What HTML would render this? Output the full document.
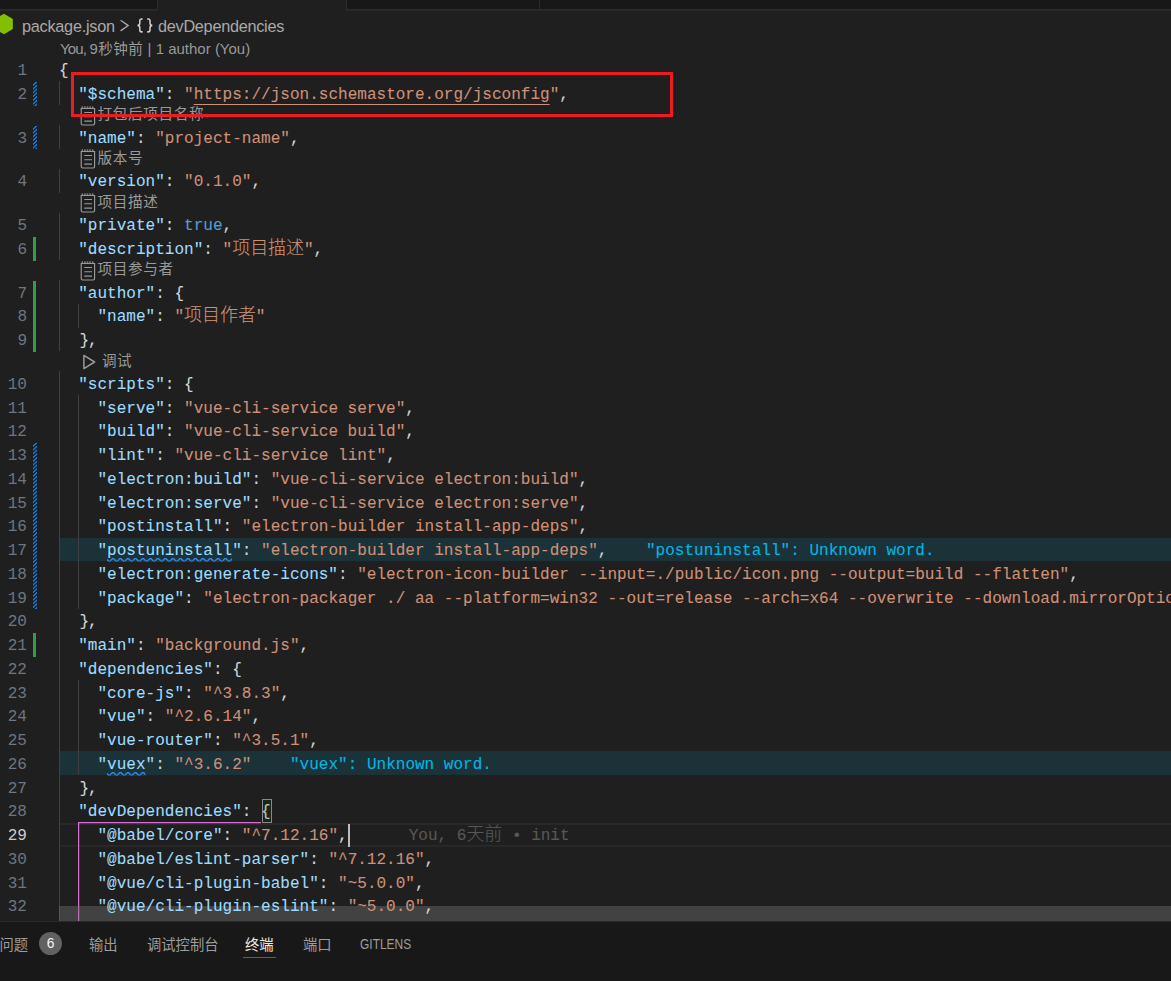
<!DOCTYPE html>
<html lang="zh-CN">
<head>
<meta charset="utf-8">
<title>package.json</title>
<style>
html,body{margin:0;padding:0;}
body{width:1171px;height:981px;overflow:hidden;background:#1f1f1f;position:relative;font-family:"Liberation Sans","Noto Sans CJK SC",sans-serif;}
.abs{position:absolute;}
#tabs{position:absolute;left:0;top:0;width:1171px;height:10px;background:#181818;}
#tabs div{position:absolute;top:0;height:9px;}
#bc{position:absolute;left:0;top:10px;width:1171px;height:27.5px;line-height:27.5px;font-size:16.25px;color:#a9a9a9;white-space:nowrap;}
.ln{position:absolute;left:0;width:27px;text-align:right;font-family:"Liberation Mono",monospace;font-size:16.04px;color:#6e7681;height:23.75px;line-height:23.75px;}
.ln.act{color:#cccccc;}
.row{position:absolute;left:59px;height:23.75px;line-height:23.75px;font-family:"Liberation Mono","Noto Sans CJK SC",monospace;font-size:16.04px;white-space:pre;color:#d4d4d4;-webkit-text-stroke:0.09px currentColor;}
.k{color:#9cdcfe;}
.s{color:#ce9178;}
.p{color:#d4d4d4;}
.b{color:#569cd6;}
.c{font-size:17.95px;line-height:0;font-weight:300;-webkit-text-stroke:0.1px currentColor;}
.c2{font-size:17.5px;line-height:0;}
.u{text-decoration:underline;text-decoration-thickness:1px;text-underline-offset:4.6px;}
.bm{position:relative;}
.bm:before{content:'';position:absolute;left:0.9px;top:-4.5px;width:10.2px;height:23.75px;box-sizing:border-box;border:1px solid #888;background:rgba(0,100,0,0.1);}
.cur{display:inline-block;width:2px;margin-left:0;height:23.75px;background:#bdbdbd;vertical-align:top;margin-right:-2px;position:relative;top:-1.5px;}
.el{color:#00b7e4;margin-left:38.5px;}
.bl{color:#585858;margin-left:61px;}
.cl{position:absolute;height:20px;line-height:20px;font-size:15px;color:#999999;white-space:nowrap;font-family:"Liberation Sans","Noto Sans CJK SC",sans-serif;}
.g{position:absolute;width:1px;background:#404040;}
.gadd{position:absolute;left:33px;width:3px;background:#2ea043;}
.gmod{position:absolute;left:33px;width:4px;background-image:linear-gradient(-45deg,#0a80e0 25%,#1f1f1f 25%,#1f1f1f 50%,#0a80e0 50%,#0a80e0 75%,#1f1f1f 75%,#1f1f1f);background-size:3.75px 3.75px;}
.hl{position:absolute;left:59px;width:1112px;height:23.75px;background:#1b3238;}
#panel{position:absolute;left:0;top:921px;width:1171px;height:60px;background:#181818;border-top:1px solid #2b2b2b;}
.pt{position:absolute;top:10px;height:26px;line-height:26px;font-size:14.3px;color:#9d9d9d;white-space:nowrap;}
</style>
</head>
<body>

<div id="tabs">
<div style="left:0;width:157px;border-right:1px solid #2b2b2b;border-bottom:1px solid #2b2b2b;"></div>
<div style="left:158px;width:188px;height:11px;background:#1f1f1f;"></div>
<div style="left:346px;width:1px;height:11px;background:#2b2b2b;"></div>
<div style="left:347px;width:192px;border-right:1px solid #2b2b2b;border-bottom:1px solid #2b2b2b;"></div>
<div style="left:540px;width:631px;border-bottom:1px solid #2b2b2b;"></div>
<div style="left:0;top:10px;width:157px;height:1px;background:#272727"></div>
<div style="left:347px;top:10px;width:824px;height:1px;background:#272727"></div>
</div>
<div id="bc">
<svg class="abs" style="left:-5px;top:3px" width="19" height="22" viewBox="0 0 19 22"><polygon points="9,0.8 17.85,5.9 17.85,16.1 9,21.2 0.15,16.1 0.15,5.9" fill="#83bf00"/></svg>
<span class="abs" style="left:22px;top:3px;letter-spacing:-0.25px">package.json</span>
<svg class="abs" style="left:119px;top:10px" width="12" height="12" viewBox="0 0 12 12"><path d="M1.6 0.3 L9.2 5.6 L1.6 10.9" fill="none" stroke="#a9a9a9" stroke-width="1.3"/></svg>
<svg class="abs" style="left:136px;top:7.6px" width="18" height="15" viewBox="0 0 18 14" preserveAspectRatio="none"><path d="M6.6 0.9 H5.6 Q3.8 0.9 3.8 2.7 V4.8 Q3.8 6.6 1.6 6.9 Q3.8 7.2 3.8 9 V11.1 Q3.8 12.9 5.6 12.9 H6.6 M11.2 0.9 H12.2 Q14 0.9 14 2.7 V4.8 Q14 6.6 16.2 6.9 Q14 7.2 14 9 V11.1 Q14 12.9 12.2 12.9 H11.2" fill="none" stroke="#d0d0d0" stroke-width="1.5"/></svg>
<span class="abs" style="left:158px;top:3px;letter-spacing:-0.27px">devDependencies</span>
</div>
<div class="hl" style="top:537.50px"></div>
<div class="hl" style="top:751.25px"></div>
<div class="abs" style="left:60px;width:1111px;top:823px;height:2px;background:#292929"></div>
<div class="abs" style="left:60px;width:1111px;top:845px;height:2px;background:linear-gradient(#2a2a2a 0,#2a2a2a 50%,#262626 50%,#262626 100%)"></div>
<div class="g" style="left:59px;top:81.25px;height:23.75px;background:#404040"></div>
<div class="g" style="left:59px;top:125.00px;height:23.75px;background:#404040"></div>
<div class="g" style="left:59px;top:168.75px;height:23.75px;background:#404040"></div>
<div class="g" style="left:59px;top:212.50px;height:47.50px;background:#404040"></div>
<div class="g" style="left:59px;top:280.00px;height:71.25px;background:#404040"></div>
<div class="g" style="left:59px;top:371.25px;height:549.75px;background:#404040"></div>
<div class="g" style="left:78px;top:303.75px;height:23.75px;background:#404040"></div>
<div class="g" style="left:78px;top:395.00px;height:213.75px;background:#404040"></div>
<div class="g" style="left:78px;top:680.00px;height:95.00px;background:#404040"></div>
<div class="g" style="left:78px;top:822.00px;height:99.00px;background:#d56ed2"></div>
<div class="g" style="left:79px;top:822.00px;height:99.00px;background:rgba(218,112,214,0.22)"></div>
<div class="abs" style="left:78px;top:822px;width:183px;height:1px;background:#d56ed2"></div>
<div class="abs" style="left:79px;top:823px;width:182px;height:1px;background:rgba(218,112,214,0.22)"></div>
<div class="abs" style="left:59px;top:906px;width:1112px;height:15px;background:rgba(121,121,121,0.4)"></div>
<div class="gmod" style="top:81.75px;height:23.75px"></div>
<div class="gmod" style="top:125.50px;height:23.75px"></div>
<div class="gadd" style="top:236.75px;height:23.75px"></div>
<div class="gadd" style="top:280.50px;height:71.25px"></div>
<div class="gmod" style="top:443.00px;height:166.25px"></div>
<div class="gadd" style="top:633.00px;height:23.75px"></div>
<div class="ln" style="top:60.00px">1</div>
<div class="ln" style="top:83.75px">2</div>
<div class="ln" style="top:127.50px">3</div>
<div class="ln" style="top:171.25px">4</div>
<div class="ln" style="top:215.00px">5</div>
<div class="ln" style="top:238.75px">6</div>
<div class="ln" style="top:282.50px">7</div>
<div class="ln" style="top:306.25px">8</div>
<div class="ln" style="top:330.00px">9</div>
<div class="ln" style="top:373.75px">10</div>
<div class="ln" style="top:397.50px">11</div>
<div class="ln" style="top:421.25px">12</div>
<div class="ln" style="top:445.00px">13</div>
<div class="ln" style="top:468.75px">14</div>
<div class="ln" style="top:492.50px">15</div>
<div class="ln" style="top:516.25px">16</div>
<div class="ln" style="top:540.00px">17</div>
<div class="ln" style="top:563.75px">18</div>
<div class="ln" style="top:587.50px">19</div>
<div class="ln" style="top:611.25px">20</div>
<div class="ln" style="top:635.00px">21</div>
<div class="ln" style="top:658.75px">22</div>
<div class="ln" style="top:682.50px">23</div>
<div class="ln" style="top:706.25px">24</div>
<div class="ln" style="top:730.00px">25</div>
<div class="ln" style="top:753.75px">26</div>
<div class="ln" style="top:777.50px">27</div>
<div class="ln" style="top:801.25px">28</div>
<div class="ln act" style="top:825.00px">29</div>
<div class="ln" style="top:848.75px">30</div>
<div class="ln" style="top:872.50px">31</div>
<div class="ln" style="top:896.25px">32</div>
<div class="row" style="top:60.00px"><span class="p">{</span></div>
<div class="row" style="top:83.75px">  <span class="k">"$schema"</span><span class="p">: </span><span class="s">"<span class="u">https://json.schemastore.org/jsconfig</span>"</span><span class="p">,</span></div>
<div class="row" style="top:127.50px">  <span class="k">"name"</span><span class="p">: </span><span class="s">"project-name"</span><span class="p">,</span></div>
<div class="row" style="top:171.25px">  <span class="k">"version"</span><span class="p">: </span><span class="s">"0.1.0"</span><span class="p">,</span></div>
<div class="row" style="top:215.00px">  <span class="k">"private"</span><span class="p">: </span><span class="b">true</span><span class="p">,</span></div>
<div class="row" style="top:238.75px">  <span class="k">"description"</span><span class="p">: </span><span class="s">"<span class="c">项目描述</span>"</span><span class="p">,</span></div>
<div class="row" style="top:282.50px">  <span class="k">"author"</span><span class="p">: {</span></div>
<div class="row" style="top:306.25px">    <span class="k">"name"</span><span class="p">: </span><span class="s">"<span class="c">项目作者</span>"</span></div>
<div class="row" style="top:330.00px">  <span class="p"><span style="position:relative;left:1.2px">}</span>,</span></div>
<div class="row" style="top:373.75px">  <span class="k">"scripts"</span><span class="p">: {</span></div>
<div class="row" style="top:397.50px">    <span class="k">"serve"</span><span class="p">: </span><span class="s">"vue-cli-service serve"</span><span class="p">,</span></div>
<div class="row" style="top:421.25px">    <span class="k">"build"</span><span class="p">: </span><span class="s">"vue-cli-service build"</span><span class="p">,</span></div>
<div class="row" style="top:445.00px">    <span class="k">"lint"</span><span class="p">: </span><span class="s">"vue-cli-service lint"</span><span class="p">,</span></div>
<div class="row" style="top:468.75px">    <span class="k">"electron:build"</span><span class="p">: </span><span class="s">"vue-cli-service electron:build"</span><span class="p">,</span></div>
<div class="row" style="top:492.50px">    <span class="k">"electron:serve"</span><span class="p">: </span><span class="s">"vue-cli-service electron:serve"</span><span class="p">,</span></div>
<div class="row" style="top:516.25px">    <span class="k">"postinstall"</span><span class="p">: </span><span class="s">"electron-builder install-app-deps"</span><span class="p">,</span></div>
<div class="row" style="top:540.00px">    <span class="k">"<span class="w">postuninstall</span>"</span><span class="p">: </span><span class="s">"electron-builder install-app-deps"</span><span class="p">,</span><span class="el">"postuninstall": Unknown word.</span></div>
<div class="row" style="top:563.75px">    <span class="k">"electron:generate-icons"</span><span class="p">: </span><span class="s">"electron-icon-builder --input=./public/icon.png --output=build --flatten"</span><span class="p">,</span></div>
<div class="row" style="top:587.50px">    <span class="k">"package"</span><span class="p">: </span><span class="s">"electron-packager ./ aa --platform=win32 --out=release --arch=x64 --overwrite --download.mirrorOptions.mirror"</span><span class="p">,</span></div>
<div class="row" style="top:611.25px">  <span class="p"><span style="position:relative;left:1.2px">}</span>,</span></div>
<div class="row" style="top:635.00px">  <span class="k">"main"</span><span class="p">: </span><span class="s">"background.js"</span><span class="p">,</span></div>
<div class="row" style="top:658.75px">  <span class="k">"dependencies"</span><span class="p">: {</span></div>
<div class="row" style="top:682.50px">    <span class="k">"core-js"</span><span class="p">: </span><span class="s">"^3.8.3"</span><span class="p">,</span></div>
<div class="row" style="top:706.25px">    <span class="k">"vue"</span><span class="p">: </span><span class="s">"^2.6.14"</span><span class="p">,</span></div>
<div class="row" style="top:730.00px">    <span class="k">"vue-router"</span><span class="p">: </span><span class="s">"^3.5.1"</span><span class="p">,</span></div>
<div class="row" style="top:753.75px">    <span class="k">"<span class="w">vuex</span>"</span><span class="p">: </span><span class="s">"^3.6.2"</span><span class="el">"vuex": Unknown word.</span></div>
<div class="row" style="top:777.50px">  <span class="p"><span style="position:relative;left:1.2px">}</span>,</span></div>
<div class="row" style="top:801.25px">  <span class="k">"devDependencies"</span><span class="p">: </span><span class="bm">{</span></div>
<div class="row" style="top:825.00px">    <span class="k">"@babel/core"</span><span class="p">: </span><span class="s">"^7.12.16"</span><span class="p">,</span><span class="cur"></span><span class="bl">You, 6<span class="c">天前</span> • init</span></div>
<div class="row" style="top:848.75px">    <span class="k">"@babel/eslint-parser"</span><span class="p">: </span><span class="s">"^7.12.16"</span><span class="p">,</span></div>
<div class="row" style="top:872.50px">    <span class="k">"@vue/cli-plugin-babel"</span><span class="p">: </span><span class="s">"~5.0.0"</span><span class="p">,</span></div>
<div class="row" style="top:896.25px">    <span class="k">"@vue/cli-plugin-eslint"</span><span class="p">: </span><span class="s">"~5.0.0"</span><span class="p">,</span></div>
<div class="cl" style="left:60px;top:38.50px"><span style="letter-spacing:-0.85px">You, </span>9<span style="font-size:14.6px;letter-spacing:0.5px;margin-left:0.4px">秒钟前</span> | 1 author (You)</div>
<div class="cl" style="left:80px;top:105.00px"><svg class="abs" style="left:0;top:0.5px" width="16" height="20" viewBox="0 0 16 20"><path d="M1.2 2.5 H14.6 V17.6 Q14.6 19 13.2 19 H2.6 Q1.2 19 1.2 17.6 Z" fill="none" stroke="#999" stroke-width="1.15"/><path d="M4.3 6.5 H12 M4.3 10.8 H12 M4.3 15.1 H12" stroke="#999" stroke-width="1.05"/><path d="M1.5 1.2 H14.4" stroke="#999" stroke-width="1.2" stroke-dasharray="1.6 1"/></svg><span style="margin-left:17.5px;position:relative;top:-0.75px;font-size:14.6px;letter-spacing:0.65px">打包后项目名称</span></div>
<div class="cl" style="left:80px;top:148.75px"><svg class="abs" style="left:0;top:0.5px" width="16" height="20" viewBox="0 0 16 20"><path d="M1.2 2.5 H14.6 V17.6 Q14.6 19 13.2 19 H2.6 Q1.2 19 1.2 17.6 Z" fill="none" stroke="#999" stroke-width="1.15"/><path d="M4.3 6.5 H12 M4.3 10.8 H12 M4.3 15.1 H12" stroke="#999" stroke-width="1.05"/><path d="M1.5 1.2 H14.4" stroke="#999" stroke-width="1.2" stroke-dasharray="1.6 1"/></svg><span style="margin-left:17.5px;position:relative;top:-0.75px;font-size:14.6px;letter-spacing:0.65px">版本号</span></div>
<div class="cl" style="left:80px;top:192.50px"><svg class="abs" style="left:0;top:0.5px" width="16" height="20" viewBox="0 0 16 20"><path d="M1.2 2.5 H14.6 V17.6 Q14.6 19 13.2 19 H2.6 Q1.2 19 1.2 17.6 Z" fill="none" stroke="#999" stroke-width="1.15"/><path d="M4.3 6.5 H12 M4.3 10.8 H12 M4.3 15.1 H12" stroke="#999" stroke-width="1.05"/><path d="M1.5 1.2 H14.4" stroke="#999" stroke-width="1.2" stroke-dasharray="1.6 1"/></svg><span style="margin-left:17.5px;position:relative;top:-0.75px;font-size:14.6px;letter-spacing:0.65px">项目描述</span></div>
<div class="cl" style="left:80px;top:260.00px"><svg class="abs" style="left:0;top:0.5px" width="16" height="20" viewBox="0 0 16 20"><path d="M1.2 2.5 H14.6 V17.6 Q14.6 19 13.2 19 H2.6 Q1.2 19 1.2 17.6 Z" fill="none" stroke="#999" stroke-width="1.15"/><path d="M4.3 6.5 H12 M4.3 10.8 H12 M4.3 15.1 H12" stroke="#999" stroke-width="1.05"/><path d="M1.5 1.2 H14.4" stroke="#999" stroke-width="1.2" stroke-dasharray="1.6 1"/></svg><span style="margin-left:17.5px;position:relative;top:-0.75px;font-size:14.6px;letter-spacing:0.65px">项目参与者</span></div>
<div class="cl" style="left:80px;top:351.25px"><svg class="abs" style="left:2px;top:3px" width="14" height="16" viewBox="0 0 14 16"><path d="M1.9 1.4 L12.6 8 L1.9 14.6 Z" fill="none" stroke="#999" stroke-width="1.5" stroke-linejoin="round"/></svg><span style="margin-left:22px;font-size:14.6px;letter-spacing:0.5px">调试</span></div>
<svg class="abs" style="left:107.12px;top:558.25px" width="125.12" height="3.75" viewBox="0 0 100.100 3"><defs><pattern id="sq1" width="6" height="3" patternUnits="userSpaceOnUse"><g fill="#3794ff"><polygon points="5.5,0 2.5,3 1.1,3 4.1,0"/><polygon points="4,0 6,2 6,0.6 5.4,0"/><polygon points="0,2 1,3 2.4,3 0,0.6"/></g></pattern></defs><rect width="100%" height="3" fill="url(#sq1)"/></svg>
<svg class="abs" style="left:107.12px;top:772.00px" width="38.50" height="3.75" viewBox="0 0 30.800 3"><defs><pattern id="sq2" width="6" height="3" patternUnits="userSpaceOnUse"><g fill="#3794ff"><polygon points="5.5,0 2.5,3 1.1,3 4.1,0"/><polygon points="4,0 6,2 6,0.6 5.4,0"/><polygon points="0,2 1,3 2.4,3 0,0.6"/></g></pattern></defs><rect width="100%" height="3" fill="url(#sq2)"/></svg>
<div class="abs" style="left:71px;top:72px;width:602px;height:45px;box-sizing:border-box;border:3px solid #ed1c24;"></div>
<div id="panel">
<span class="pt" style="left:-0.5px">问题</span>
<span class="abs" style="left:39px;top:10px;width:23px;height:23px;border-radius:12px;background:#616161;color:#f8f8f8;font-size:13.75px;line-height:23px;text-align:center;">6</span>
<span class="pt" style="left:89px">输出</span>
<span class="pt" style="left:147px">调试控制台</span>
<span class="pt" style="left:245px;color:#e7e7e7">终端</span>
<div class="abs" style="left:243px;top:35px;width:33px;height:1px;background:#0078d4"></div>
<span class="pt" style="left:303px">端口</span>
<span class="pt" style="left:360px;font-size:13.75px;transform:scaleX(0.87);transform-origin:0 50%;display:inline-block">GITLENS</span>
</div>
</body>
</html>
